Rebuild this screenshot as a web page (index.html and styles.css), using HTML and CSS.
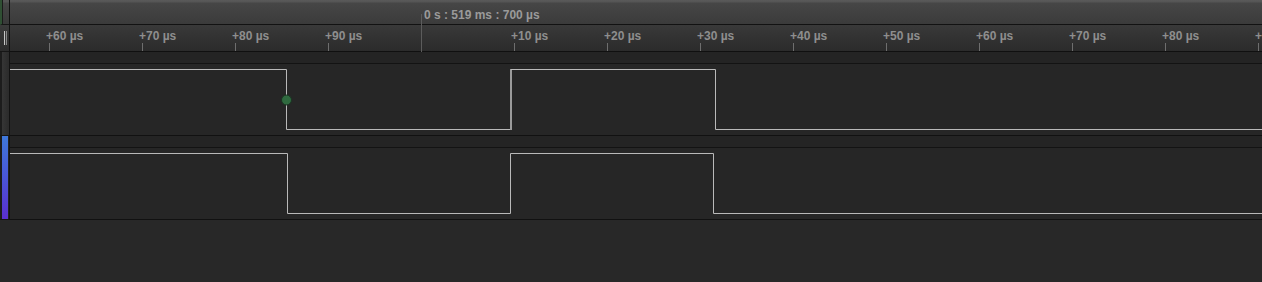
FILE: index.html
```html
<!doctype html>
<html>
<head>
<meta name="viewport" content="width=device-width">
<link rel="stylesheet" href="styles.css">
</head>
<body>
<div class="view">
  <div class="side">
    <div class="side-top"></div>
    <div class="side-ruler"><span class="grip"></span></div>
    <div class="side-ch"></div>
    <div class="side-ch ch2"></div>
  </div>
  <div class="main">
    <div class="scale">
      <div class="top"><span class="origin">0 s : 519 ms : 700 µs</span></div>
      <div class="ruler">
        <div class="tick"><span>+60 µs</span></div>
        <div class="tick"><span>+70 µs</span></div>
        <div class="tick"><span>+80 µs</span></div>
        <div class="tick"><span>+90 µs</span></div>
        <div class="tick zero"><span>&nbsp;</span></div>
        <div class="tick"><span>+10 µs</span></div>
        <div class="tick"><span>+20 µs</span></div>
        <div class="tick"><span>+30 µs</span></div>
        <div class="tick"><span>+40 µs</span></div>
        <div class="tick"><span>+50 µs</span></div>
        <div class="tick"><span>+60 µs</span></div>
        <div class="tick"><span>+70 µs</span></div>
        <div class="tick"><span>+80 µs</span></div>
        <div class="tick"><span>+</span></div>
      </div>
      <div class="marker"></div>
    </div>
    <div class="ch">
      <div class="ch-head"></div>
      <svg class="wave" width="1252" height="71">
        <polyline points="0,5.5 276.5,5.5 276.5,65.5 500,65.5" fill="none" stroke="#b9b9b9" stroke-width="1"/>
        <line x1="501" y1="5" x2="501" y2="66" stroke="#9a9a9a" stroke-width="2"/>
        <polyline points="501,5.5 705.5,5.5 705.5,65.5 1252,65.5" fill="none" stroke="#b9b9b9" stroke-width="1"/>
        <circle cx="276.5" cy="36" r="5" fill="#2f6a3f" stroke="#1b3323" stroke-width="1"/>
      </svg>
    </div>
    <div class="ch">
      <div class="ch-head"></div>
      <svg class="wave" width="1252" height="71">
        <polyline points="0,5.5 277.5,5.5 277.5,65.5 500.5,65.5 500.5,5.5 703.5,5.5 703.5,65.5 1252,65.5" fill="none" stroke="#b9b9b9" stroke-width="1"/>
      </svg>
    </div>
  </div>
</div>
</body>
</html>
```

FILE: styles.css
```css
body{margin:0; background:#282828; font:bold 12px "Liberation Sans", Arial, sans-serif; color:#8e8e8e}
.view{display:flex}
.side{width:9px; border-right:1px solid #121212; display:flex; flex-direction:column}
.side-top{height:24px; border-bottom:1px solid #161616; background:linear-gradient(#555 0,#555 2px,#454545 3px,#393939); border-left:2px solid #2f4f33; box-shadow:inset 1px 0 #1b1b1b}
.side-ruler{height:26px; border-bottom:1px solid #161616; background:linear-gradient(#3a3a3a,#2c2c2c); display:flex; align-items:flex-start; padding-left:4px}
.grip{margin-top:6px; width:1px; height:14px; border-left:1px solid #c6c6c6; border-right:1px solid #8a8a8a; background:#3a3a3a}
.side-ch{height:83px; border-bottom:1px solid #141414; background:linear-gradient(90deg,#1c1c1c 0,#1c1c1c 2px,#363636 2px,#2c2c2c 8px)}
.side-ch.ch2{background:linear-gradient(90deg,#1c1c1c 0,#1c1c1c 2px,transparent 2px,transparent 8px,#222 8px),linear-gradient(#3f78da,#4a55d6 50%,#5a2fcf)}
.main{flex:1; overflow:hidden}
.scale{position:relative}
.top{height:16px; padding-top:8px; border-bottom:1px solid #121212; background:linear-gradient(#5a5a5a 0,#555 2px,#464646 3px,#3b3b3b); line-height:14px}
.origin{margin-left:414px; color:#9a9a9a}
.ruler{height:26px; border-bottom:1px solid #101010; background:linear-gradient(#393939,#2b2b2b); display:flex; padding-left:36px}
.tick{flex:none; width:93px; padding-top:4px; line-height:14px; white-space:nowrap}
.tick::after{content:""; display:block; margin-left:3px; width:1px; height:8px; background:#6e6e6e}
.tick.zero::after{background:transparent}
.marker{position:absolute; left:411px; top:14px; width:1px; height:38px; background:#5c5c5c}
.ch{border-bottom:1px solid #111}
.ch-head{height:11px; border-bottom:1px solid #131313; background:#242424}
.wave{display:block; background:#262626}
```
